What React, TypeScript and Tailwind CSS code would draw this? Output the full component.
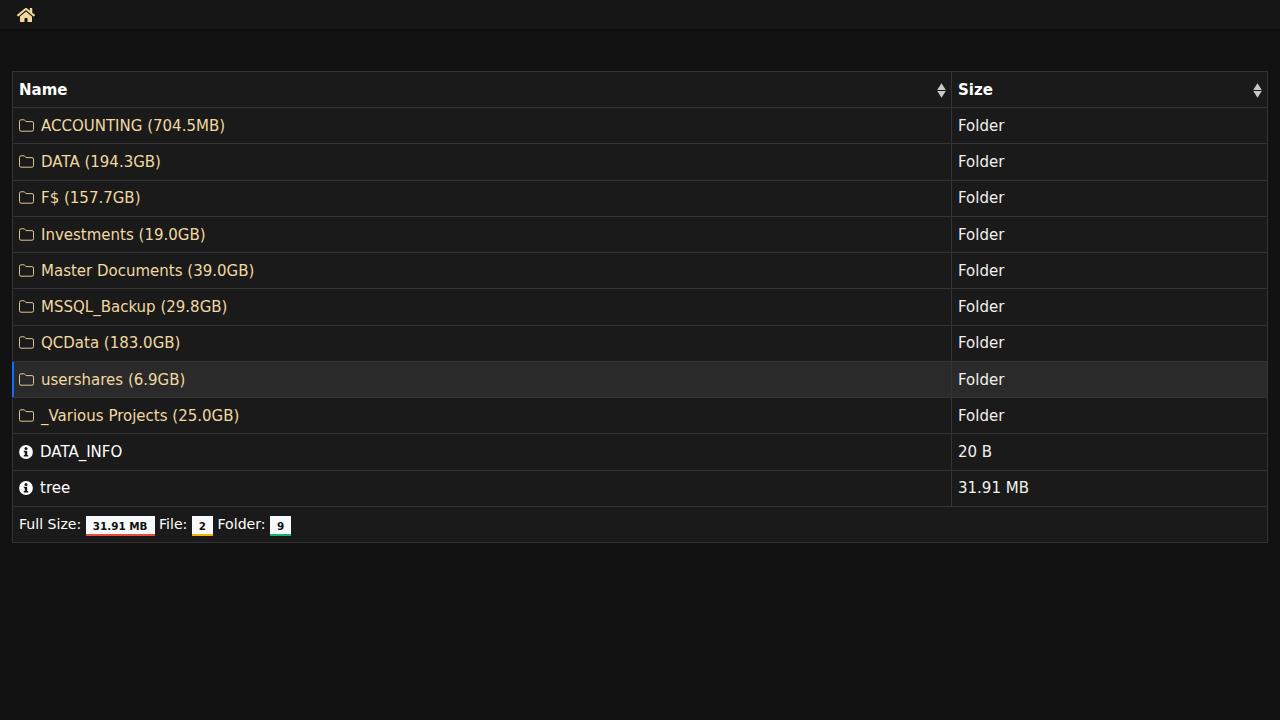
import { FaHome } from 'react-icons/fa';

const folders = [
  'ACCOUNTING (704.5MB)',
  'DATA (194.3GB)',
  'F$ (157.7GB)',
  'Investments (19.0GB)',
  'Master Documents (39.0GB)',
  'MSSQL_Backup (29.8GB)',
  'QCData (183.0GB)',
  'usershares (6.9GB)',
  '_Various Projects (25.0GB)',
];

const files = [
  { name: 'DATA_INFO', size: '20 B' },
  { name: 'tree', size: '31.91 MB' },
];

function SortArrows() {
  return (
    <svg className="absolute right-[5px] top-[10.5px]" width="9" height="15" viewBox="0 0 9 15">
      <path d="M4.5 0.2 L8.8 6.9 H0.2 Z" fill="#c8c8c8" />
      <path d="M4.5 14.8 L8.8 8.1 H0.2 Z" fill="#c8c8c8" />
    </svg>
  );
}

function FolderIcon() {
  return (
    <svg width="15" height="13" viewBox="0 0 15 13" fill="none" stroke="currentColor" strokeWidth="1" className="shrink-0 -mt-[1px] opacity-90">
      <path d="M2 0.8 H5.4 L7 2.6 H13 A1.5 1.5 0 0 1 14.5 4.1 V10.7 A1.5 1.5 0 0 1 13 12.2 H2 A1.5 1.5 0 0 1 0.5 10.7 V2.3 A1.5 1.5 0 0 1 2 0.8 Z" />
    </svg>
  );
}

function InfoIcon() {
  return (
    <svg width="14" height="14" viewBox="0 0 14 14" className="shrink-0">
      <circle cx="7" cy="7" r="6.9" fill="currentColor" />
      <circle cx="7" cy="3.5" r="1.5" fill="#1a1a1a" />
      <path d="M4.8 5.7 H8.2 V10 H9.2 V11.6 H4.8 V10 H5.8 V7.2 H4.8 Z" fill="#1a1a1a" />
    </svg>
  );
}

function Badge({ text, color }: { text: string; color: string }) {
  return (
    <span
      className={`inline-block h-5 px-[7px] bg-[#f8f9fa] text-[#111111] text-[10.4px] font-bold leading-[20px] align-[-1px] border-b-2 ${color}`}
    >
      {text}
    </span>
  );
}

export default function App() {
  return (
    <div className="min-h-[720px] bg-[#121212] text-[15px] leading-[22px] text-white font-['DejaVu_Sans',sans-serif]">
      <nav className="h-[29px] bg-[#161616] shadow-[0_1px_3px_rgba(0,0,0,0.4)] pl-[16.5px] flex items-center">
        <FaHome size={18} className="text-[#f0d8a0]" />
      </nav>

      <main className="px-3 pt-[42px]">
        <table className="w-full table-fixed border-collapse bg-[#1a1a1a]">
          <colgroup>
            <col className="w-[939px]" />
            <col />
          </colgroup>
          <thead>
            <tr>
              <th className="relative border border-[#333333] px-[6px] py-[6.6px] text-left font-bold">
                Name
                <SortArrows />
              </th>
              <th className="relative border border-[#333333] px-[6px] py-[6.6px] text-left font-bold">
                Size
                <SortArrows />
              </th>
            </tr>
          </thead>
          <tbody>
            {folders.map((name) => {
              const active = name.startsWith('usershares');
              return (
                <tr key={name} className={active ? 'bg-[#2a2a2a]' : ''}>
                  <td className="relative border border-[#333333] px-[6px] py-[6.625px] text-[#f0d8a0]">
                    {active && <span className="absolute -left-px top-0 bottom-0 w-[2px] bg-[#0d6efd]" />}
                    <span className="flex items-center gap-[7px]">
                      <FolderIcon />
                      {name}
                    </span>
                  </td>
                  <td className="border border-[#333333] px-[6px] py-[6.625px] text-[#f0f0f0]">Folder</td>
                </tr>
              );
            })}
            {files.map((f) => (
              <tr key={f.name}>
                <td className="border border-[#333333] px-[6px] py-[6.625px]">
                  <span className="flex items-center gap-[7px]">
                    <InfoIcon />
                    {f.name}
                  </span>
                </td>
                <td className="border border-[#333333] px-[6px] py-[6.625px] text-[#f0f0f0]">{f.size}</td>
              </tr>
            ))}
          </tbody>
          <tfoot>
            <tr>
              <td colSpan={2} className="border border-[#333333] px-[6px] pt-[7px] pb-[6px] text-[14.1px] leading-[21px]">
                Full Size: <Badge text="31.91 MB" color="border-[#e74c3c]" /> File:{' '}
                <Badge text="2" color="border-[#f5b400]" /> Folder: <Badge text="9" color="border-[#12b76a]" />
              </td>
            </tr>
          </tfoot>
        </table>
      </main>
    </div>
  );
}
